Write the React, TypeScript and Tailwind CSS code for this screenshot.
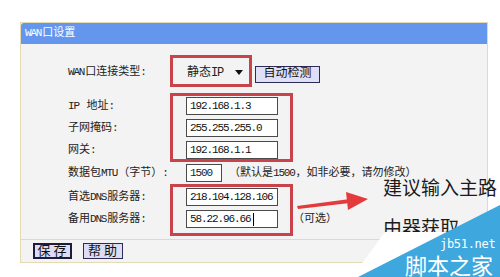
const ui = "font-['Liberation_Mono','Noto_Sans_CJK_SC',monospace]";
const cjk = "font-['Noto_Sans_CJK_SC','Noto_Sans',sans-serif]";

function Lat({ children }: { children: string }) {
  return <span className="tracking-[-1.2px] mr-[1px]">{children}</span>;
}

function Field({ value, caret }: { value: string; caret?: boolean }) {
  return (
    <div className="w-[92px] h-[18px] bg-white border border-[#4a4a4a] flex items-center pl-[3px] text-[11px] tracking-[-1.1px] text-[#111]">
      <span>{value}</span>
      {caret && <span className="w-px h-[13px] bg-black ml-[2px]" />}
    </div>
  );
}

function Label({ children }: { children: React.ReactNode }) {
  return <div className="h-[18px] leading-[18px] whitespace-nowrap">{children}</div>;
}

export default function App() {
  return (
    <div className={`relative w-[500px] h-[277px] overflow-hidden bg-white pt-[22px] pl-[20px] ${ui}`}>
      {/* WAN panel */}
      <div className="w-[468px] border border-[#e4dab4] bg-[#f3f3f3] text-[11px] text-[#222]">
        <div className="h-[21px] bg-[#6496ee] rounded-tl-[3px] text-white pl-[4px] flex items-center">
          <Lat>WAN</Lat>口设置
        </div>

        <div className="pl-[47px] pt-[11px] pb-[3px] flex flex-col">
          {/* connection type */}
          <div className="flex items-center">
            <div className="w-[102px] whitespace-nowrap pt-[3px]">
              <Lat>WAN</Lat>口连接类型:
            </div>
            <div className="w-[82px] h-[32px] border-[3px] border-[#c9434b] flex items-center pl-[14px] pt-[3px] text-[12px]">
              <span>静态<Lat>IP</Lat></span>
              <svg width="8" height="5" viewBox="0 0 8 5" className="ml-[11px]">
                <path d="M0 0h8L4 5z" fill="#111" />
              </svg>
            </div>
            <button className="ml-[3px] mt-[6px] w-[65px] h-[17px] bg-[#dfe0f8] border border-[#2b2b55] text-[12px] leading-none text-[#111]">
              自动检测
            </button>
          </div>

          {/* ip / mask / gateway */}
          <div className="flex mt-[6px]">
            <div className="w-[102px] flex flex-col gap-[4px] pt-[4px]">
              <Label><Lat>IP</Lat> 地址:</Label>
              <Label>子网掩码:</Label>
              <Label>网关:</Label>
            </div>
            <div className="w-[123px] h-[69px] border-[3px] border-[#c9434b] pl-[13px] pt-[1px] flex flex-col gap-[4px]">
              <Field value="192.168.1.3" />
              <Field value="255.255.255.0" />
              <Field value="192.168.1.1" />
            </div>
          </div>

          {/* mtu */}
          <div className="flex items-center mt-[2px] h-[18px]">
            <div className="w-[102px] whitespace-nowrap">
              数据包<Lat>MTU</Lat>（字节）:
            </div>
            <div className="ml-[16px] w-[36px] h-[18px] bg-white border border-[#4a4a4a] flex items-center pl-[3px] tracking-[-1.1px]">
              1500
            </div>
            <div className="ml-[7px] whitespace-nowrap">
              （默认是<Lat>1500</Lat>，如非必要，请勿修改）
            </div>
          </div>

          {/* dns */}
          <div className="flex mt-[2px]">
            <div className="w-[102px] flex flex-col gap-[4px] pt-[4px]">
              <Label>首选<Lat>DNS</Lat>服务器:</Label>
              <Label>备用<Lat>DNS</Lat>服务器:</Label>
            </div>
            <div className="w-[123px] h-[52px] border-[3px] border-[#c9434b] pl-[13px] pt-[1px] flex flex-col gap-[4px]">
              <Field value="218.104.128.106" />
              <Field value="58.22.96.66" caret />
            </div>
            <div className="self-end mb-[8px] h-[18px] leading-[18px]">（可选）</div>
          </div>
        </div>

        {/* footer */}
        <div className="h-[23px] border-t border-[#e4dab4] flex items-center pl-[12px] gap-[11px]">
          <button className="w-[39px] h-[16px] bg-[#dcdcf4] border-2 border-[#1c1c3c] text-[13px] leading-none tracking-[3px] text-[#111] pl-[2px]">
            保存
          </button>
          <button className="w-[40px] h-[16px] bg-[#dcdcf4] border border-[#2b2b55] text-[13px] leading-none tracking-[3px] text-[#111] pl-[2px]">
            帮助
          </button>
        </div>
      </div>

      {/* annotation arrow */}
      <svg className="absolute left-[296px] top-[190px]" width="74" height="22" viewBox="0 0 74 22">
        <path d="M1 16 L54 9 L54 13 L2 19 Z" fill="#e43a3c" />
        <path d="M50 2 L72 9 L52 20 Z" fill="#e43a3c" />
      </svg>

      {/* annotation text */}
      <div className={`absolute left-[383px] top-[167px] text-[19px] leading-[40px] text-[#1b1b1b] whitespace-nowrap ${cjk}`}>
        <div>建议输入主路</div>
        <div>由器获取</div>
      </div>

      {/* watermark */}
      <svg className="absolute left-[340px] top-[200px]" width="160" height="77" viewBox="0 0 160 77">
        <path d="M45 32 L160 32 L160 77 L12 77 Z" fill="#ffffff" />
        <path d="M160 5 L160 77 L18 77 Z" fill="#3ea7de" />
      </svg>
      <div className="absolute left-[440px] top-[238px] text-[12px] leading-none text-white font-['DejaVu_Sans_Mono',monospace] tracking-[-0.3px]">
        jb51.net
      </div>
      <div className={`absolute left-[405px] top-[253px] text-[22px] leading-none text-white ${cjk}`}>
        脚本之家
      </div>
    </div>
  );
}
